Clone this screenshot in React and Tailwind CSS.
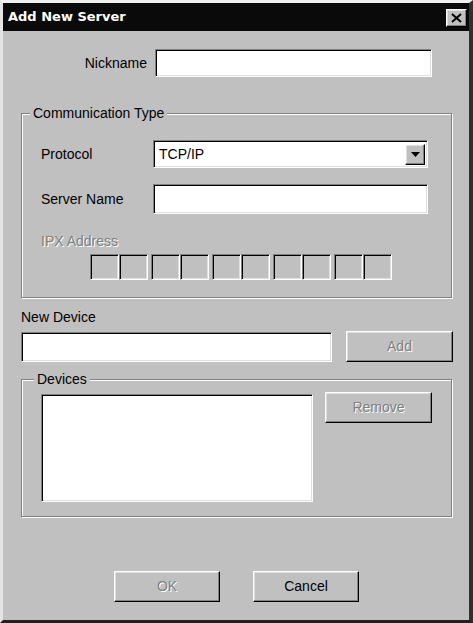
import { useState } from 'react';

const raised =
  'border border-t-white border-l-white border-r-black border-b-black shadow-[inset_-1px_-1px_0_#808080,inset_1px_1px_0_#dfdfdf] bg-[#c0c0c0]';
const sunken =
  'border border-t-[#808080] border-l-[#808080] border-r-white border-b-white shadow-[inset_1px_1px_0_#000,inset_-1px_-1px_0_#dfdfdf]';
const groove =
  'border border-[#808080] shadow-[inset_1px_1px_0_#fff,1px_1px_0_#fff]';
const disabledText = 'text-[#808080] [text-shadow:1px_1px_0_#fff]';

const Button = ({ children, disabled, className = '' }) => (
  <button
    className={`${raised} ${className} flex items-center justify-center text-[14px] ${disabled ? disabledText : 'text-black'}`}
  >
    {children}
  </button>
);

const App = () => {
  const [nickname, setNickname] = useState('');
  const [serverName, setServerName] = useState('');
  const [device, setDevice] = useState('');

  return (
    <div
      className="w-[473px] h-[623px] bg-[#c0c0c0] border-t-[3px] border-l-[3px] border-r-[4px] border-b-[3px] border-t-[#f0f0f0] border-l-[#e4e4e4] border-r-[#303030] border-b-[#202020] flex flex-col text-black"
      style={{ fontFamily: '"Liberation Sans", Arial, sans-serif' }}
    >
      {/* Title bar */}
      <div className="h-[28px] bg-[#0a0a0a] flex items-center justify-between pl-[5px] pr-[2px]">
        <span
          className="text-white font-bold text-[13px]"
          style={{ fontFamily: '"DejaVu Sans", Verdana, sans-serif' }}
        >
          Add New Server
        </span>
        <button className={`${raised} w-[21px] h-[18px] flex items-center justify-center mt-[1px]`}>
          <svg width="11" height="10" viewBox="0 0 11 10">
            <path d="M1 1 L10 9 M10 1 L1 9" stroke="#000" strokeWidth="2" />
          </svg>
        </button>
      </div>

      {/* Nickname */}
      <div className="flex items-center mt-[18px]">
        <span className="w-[144px] text-right text-[14px]">Nickname</span>
        <input
          value={nickname}
          onChange={(e) => setNickname(e.target.value)}
          className={`${sunken} ml-[8px] w-[277px] h-[28px] bg-white px-[3px] text-[14px] outline-none`}
        />
      </div>

      {/* Communication Type */}
      <fieldset className={`${groove} ml-[18px] w-[431px] mt-[28px] pl-[19px] pb-[17px]`}>
        <legend className="-ml-[11px] px-[3px] text-[14px] leading-[16px] bg-[#c0c0c0]">Communication Type</legend>
        <div className="flex items-center mt-[19px]">
          <span className="w-[112px] text-[14px]">Protocol</span>
          <div className={`${sunken} w-[275px] h-[28px] bg-white flex items-center justify-between pl-[5px] pr-[2px]`}>
            <span className="text-[14px]">TCP/IP</span>
            <div className={`${raised} w-[20px] h-[21px] flex items-center justify-center`}>
              <svg width="9" height="5" viewBox="0 0 9 5">
                <path d="M0 0 H9 L4.5 5 Z" fill="#000" />
              </svg>
            </div>
          </div>
        </div>
        <div className="flex items-center mt-[16px]">
          <span className="w-[112px] text-[14px]">Server Name</span>
          <input
            value={serverName}
            onChange={(e) => setServerName(e.target.value)}
            className={`${sunken} w-[275px] h-[30px] bg-white px-[3px] text-[14px] outline-none`}
          />
        </div>
        <div className={`mt-[19px] text-[14px] leading-[16px] ${disabledText}`}>IPX Address</div>
        <div className="flex gap-[3px] ml-[49px] mt-[5px]">
          {[0, 1, 2, 3, 4].map((i) => (
            <div key={i} className="flex">
              <div className={`${sunken} w-[29px] h-[26px]`} />
              <div className={`${sunken} w-[29px] h-[26px]`} />
            </div>
          ))}
        </div>
      </fieldset>

      {/* New Device */}
      <div className="ml-[18px] mt-[11px] text-[14px] leading-[16px]">New Device</div>
      <div className="flex items-center ml-[18px] mt-[6px]">
        <input
          value={device}
          onChange={(e) => setDevice(e.target.value)}
          className={`${sunken} w-[311px] h-[30px] bg-white px-[3px] text-[14px] outline-none`}
        />
        <Button disabled className="ml-[14px] w-[107px] h-[31px]">
          Add
        </Button>
      </div>

      {/* Devices */}
      <fieldset className={`${groove} ml-[18px] w-[431px] mt-[9px] pl-[19px] pb-[14px]`}>
        <legend className="-ml-[7px] px-[3px] text-[14px] leading-[16px] bg-[#c0c0c0]">Devices</legend>
        <div className="flex items-start mt-[7px]">
          <div className={`${sunken} w-[272px] h-[108px] bg-white`} />
          <Button disabled className="ml-[12px] w-[107px] h-[31px] -mt-[2px]">
            Remove
          </Button>
        </div>
      </fieldset>

      {/* OK / Cancel */}
      <div className="flex ml-[111px] mt-[54px] gap-[33px]">
        <Button disabled className="w-[106px] h-[31px]">
          OK
        </Button>
        <Button className="w-[106px] h-[31px]">Cancel</Button>
      </div>
    </div>
  );
};

export default App;
